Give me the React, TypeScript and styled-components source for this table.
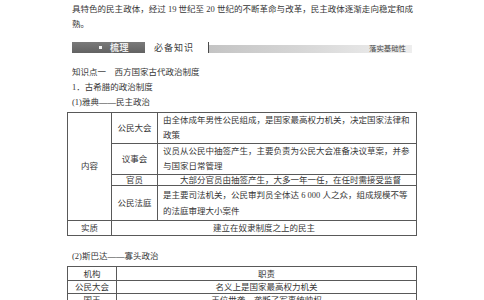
import React from 'react';
import styled, { createGlobalStyle } from 'styled-components';

const Global = createGlobalStyle`
  html, body { margin: 0; padding: 0; background: #ffffff; }
  body {
    font-family: "Liberation Serif", "Noto Sans CJK SC", serif;
    color: #363636;
    font-size: 8.5px;
  }
`;

const Page = styled.div`
  width: 350px;
  padding: 2px 0 0 67px;
`;

const Para = styled.div`
  padding-left: 5px;
  width: 341px;
  line-height: 14.5px;
`;

const JustifiedLine = styled.div`
  text-align: justify;
  text-align-last: justify;
`;

const Banner = styled.div`
  margin: 11px 0 0 5px;
  width: 340px;
  height: 11px;
  display: flex;
  align-items: stretch;
`;

const Tag = styled.div`
  box-sizing: border-box;
  width: 73px;
  background: linear-gradient(#7a7a7a, #626262);
  color: #eeeeee;
  display: flex;
  align-items: center;
  padding-left: 27px;
  gap: 8px;
  font-weight: bold;
  font-size: 9px;
  letter-spacing: 0.5px;
`;

const Square = styled.span`
  width: 3px;
  height: 3px;
  background: #f4f4f4;
`;

const SubLabel = styled.div`
  box-sizing: border-box;
  width: 63px;
  padding-left: 9px;
  display: flex;
  align-items: center;
  font-size: 9px;
  letter-spacing: 1px;
  color: #3a3a3a;
`;

const Divider = styled.div`
  width: 1px;
  background: #4a4a4a;
`;

const Band = styled.div`
  flex: 1;
  align-self: flex-end;
  height: 8px;
  background: linear-gradient(90deg, #c4c4c4 0%, #d6d6d6 45%, #e7e7e7 80%, #eeeeee 100%);
  display: flex;
  align-items: center;
  justify-content: flex-end;
  padding-right: 6px;
  font-size: 7.4px;
  line-height: 8px;
  color: #474747;
`;

const Heading = styled.div<{ $mt?: number }>`
  padding-left: 5px;
  line-height: 15px;
  margin-top: ${p => p.$mt ?? 0}px;
`;

const Table = styled.table<{ $mt: number }>`
  border-collapse: collapse;
  table-layout: fixed;
  width: 350px;
  margin-top: ${p => p.$mt}px;
  border: 1px solid #555555;
`;

const Col = styled.col<{ $w?: number }>`
  width: ${p => (p.$w ? `${p.$w}px` : 'auto')};
`;

const Row = styled.tr<{ $h: number }>`
  height: ${p => p.$h}px;
`;

const Cell = styled.td<{ $align?: 'left' | 'center'; $lh?: number; $indent?: boolean }>`
  border: 1px solid #595959;
  padding: 0 ${p => (p.$align === 'left' ? '0 0 5px' : '0')};
  text-align: ${p => p.$align ?? 'center'};
  vertical-align: middle;
  line-height: ${p => p.$lh ?? 15}px;
  text-indent: ${p => (p.$indent ? '2em' : '0')};
  white-space: nowrap;
  overflow: hidden;
`;

export default function App() {
  return (
    <>
      <Global />
      <Page>
        <Para>
          <JustifiedLine>具特色的民主政体，经过 19 世纪至 20 世纪的不断革命与改革，民主政体逐渐走向稳定和成</JustifiedLine>
          <div>熟。</div>
        </Para>

        <Banner>
          <Tag>
            <Square />
            <span>梳理</span>
          </Tag>
          <SubLabel>必备知识</SubLabel>
          <Divider />
          <Band>落实基础性</Band>
        </Banner>

        <Heading $mt={11.5}>知识点一　西方国家古代政治制度</Heading>
        <Heading>1．古希腊的政治制度</Heading>
        <Heading>(1)雅典——民主政治</Heading>

        <Table $mt={2.5}>
          <colgroup>
            <Col $w={44} />
            <Col $w={46} />
            <Col />
          </colgroup>
          <tbody>
            <Row $h={30}>
              <Cell rowSpan={4}>内容</Cell>
              <Cell>公民大会</Cell>
              <Cell $align="left">
                由全体成年男性公民组成，是国家最高权力机关，决定国家法律和
                <br />
                政策
              </Cell>
            </Row>
            <Row $h={29}>
              <Cell>议事会</Cell>
              <Cell $align="left">
                议员从公民中抽签产生，主要负责为公民大会准备决议草案，并参
                <br />
                与国家日常管理
              </Cell>
            </Row>
            <Row $h={11}>
              <Cell $lh={10}>官员</Cell>
              <Cell $align="left" $lh={10} $indent>
                大部分官员由抽签产生，大多一年一任，在任时需接受监督
              </Cell>
            </Row>
            <Row $h={35}>
              <Cell>公民法庭</Cell>
              <Cell $align="left" $lh={16}>
                是主要司法机关，公民审判员全体达 6 000 人之众，组成规模不等
                <br />
                的法庭审理大小案件
              </Cell>
            </Row>
            <Row $h={15}>
              <Cell $lh={13}>实质</Cell>
              <Cell colSpan={2} $lh={13}>建立在奴隶制度之上的民主</Cell>
            </Row>
          </tbody>
        </Table>

        <Heading $mt={13}>(2)斯巴达——寡头政治</Heading>

        <Table $mt={2}>
          <colgroup>
            <Col $w={49} />
            <Col />
          </colgroup>
          <tbody>
            <Row $h={14}>
              <Cell $lh={12}>机构</Cell>
              <Cell $lh={12}>职责</Cell>
            </Row>
            <Row $h={13}>
              <Cell $lh={12}>公民大会</Cell>
              <Cell $lh={12}>名义上是国家最高权力机关</Cell>
            </Row>
            <Row $h={13}>
              <Cell $lh={12}>国王</Cell>
              <Cell $lh={12}>王位世袭，垄断了军事统帅权</Cell>
            </Row>
          </tbody>
        </Table>
      </Page>
    </>
  );
}
